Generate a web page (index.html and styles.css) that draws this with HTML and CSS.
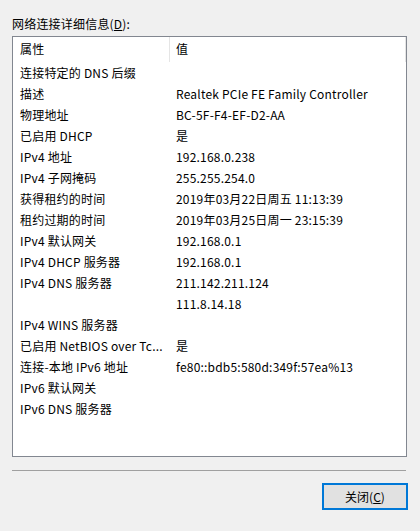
FILE: index.html
```html
<!DOCTYPE html>
<html lang="zh-CN">
<head>
<meta charset="utf-8">
<title>网络连接详细信息</title>
<link rel="stylesheet" href="styles.css">
</head>
<body>
<div class="dialog">
  <div class="label">网络连接详细信息(<u>D</u>):</div>
  <div class="list">
    <div class="head">
      <div class="hcell hname">属性</div>
      <div class="hcell hval">值</div>
    </div>
    <div class="row"><div class="name">连接特定的 DNS 后缀</div><div class="val"></div></div>
    <div class="row"><div class="name">描述</div><div class="val">Realtek PCIe FE Family Controller</div></div>
    <div class="row"><div class="name">物理地址</div><div class="val">BC-5F-F4-EF-D2-AA</div></div>
    <div class="row"><div class="name">已启用 DHCP</div><div class="val">是</div></div>
    <div class="row"><div class="name">IPv4 地址</div><div class="val">192.168.0.238</div></div>
    <div class="row"><div class="name">IPv4 子网掩码</div><div class="val">255.255.254.0</div></div>
    <div class="row"><div class="name">获得租约的时间</div><div class="val">2019年03月22日周五 11:13:39</div></div>
    <div class="row"><div class="name">租约过期的时间</div><div class="val">2019年03月25日周一 23:15:39</div></div>
    <div class="row"><div class="name">IPv4 默认网关</div><div class="val">192.168.0.1</div></div>
    <div class="row"><div class="name">IPv4 DHCP 服务器</div><div class="val">192.168.0.1</div></div>
    <div class="row"><div class="name">IPv4 DNS 服务器</div><div class="val">211.142.211.124</div></div>
    <div class="row"><div class="name"></div><div class="val">111.8.14.18</div></div>
    <div class="row"><div class="name">IPv4 WINS 服务器</div><div class="val"></div></div>
    <div class="row"><div class="name">已启用 NetBIOS over Tc...</div><div class="val">是</div></div>
    <div class="row"><div class="name">连接-本地 IPv6 地址</div><div class="val">fe80::bdb5:580d:349f:57ea%13</div></div>
    <div class="row"><div class="name">IPv6 默认网关</div><div class="val"></div></div>
    <div class="row"><div class="name">IPv6 DNS 服务器</div><div class="val"></div></div>
  </div>
  <div class="sep"></div>
  <div class="actions">
    <button class="btn">关闭(<u>C</u>)</button>
  </div>
</div>
</body>
</html>
```
FILE: styles.css
```css
html, body {
  margin: 0;
  padding: 0;
  background: #f0f0f0;
}
body {
  font-family: "Noto Sans CJK SC", "Noto Sans", sans-serif;
  font-size: 12px;
  letter-spacing: 0.2px;
  color: #000;
}
.dialog {
  width: 420px;
  height: 531px;
  padding: 16px 13px 0 12px;
  box-sizing: border-box;
}
.label {
  height: 16px;
  line-height: 16px;
  margin-bottom: 4px;
}
.label u, .btn u {
  text-decoration-thickness: 1px;
  text-underline-offset: 1px;
}
.list {
  height: 421px;
  box-sizing: border-box;
  border: 1px solid #828790;
  background: #fff;
  display: flex;
  flex-direction: column;
}
.head {
  display: flex;
  height: 25px;
}
.hcell {
  line-height: 24px;
  border-right: 1px solid #e5e5e5;
  box-sizing: border-box;
}
.hname {
  width: 157px;
  padding-left: 7px;
}
.hval {
  width: 236px;
  padding-left: 6px;
}
.row {
  display: flex;
  height: 21px;
  line-height: 21px;
  white-space: nowrap;
}
.name {
  width: 157px;
  padding-left: 7px;
  box-sizing: border-box;
  overflow: hidden;
}
.val {
  padding-left: 6px;
}
.sep {
  margin-top: 13px;
  height: 1px;
  width: 394px;
  background: #a0a0a0;
}
.actions {
  display: flex;
  justify-content: flex-end;
  padding-top: 12px;
}
.btn {
  width: 86px;
  height: 27px;
  margin-right: -1px;
  border: 2px solid #0078d7;
  background: #e1e1e1;
  font: inherit;
  color: #000;
  padding: 0;
}
```
